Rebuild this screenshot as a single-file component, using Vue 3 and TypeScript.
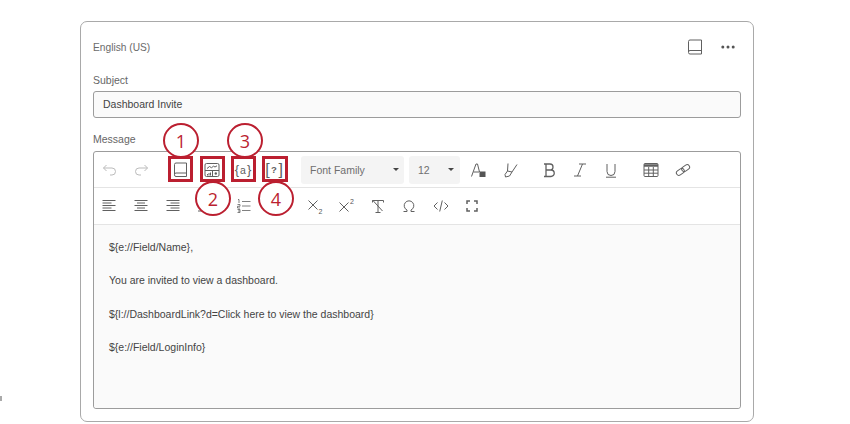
<script setup lang="ts">
const lines: string[] = [
  '${e://Field/Name},',
  'You are invited to view a dashboard.',
  '${l://DashboardLink?d=Click here to view the dashboard}',
  '${e://Field/LoginInfo}',
]
const marks = [
  { n: 1, cls: 'c1' },
  { n: 2, cls: 'c2' },
  { n: 3, cls: 'c3' },
  { n: 4, cls: 'c4' },
]
const boxes = ['b1', 'b2', 'b3', 'b4']
</script>

<template>
  <div class="page">
    <section class="card">
      <header class="head">
        <span class="lang">English (US)</span>
        <div class="head-icons">
          <svg class="ico" viewBox="0 0 16 16"><path d="M1.5 13V2.500A1.500 1.500 0 0 1 3 1H14.500V15H3a1.500 1.500 0 0 1-1.500-1.500V13A1.500 1.500 0 0 1 3 11.500H14.500"/></svg>
          <svg width="14" height="4" viewBox="0 0 14 4"><circle cx="1.800" cy="2" r="1.500" fill="#555"/><circle cx="7" cy="2" r="1.500" fill="#555"/><circle cx="12.200" cy="2" r="1.500" fill="#555"/></svg>
        </div>
      </header>

      <label class="lbl subject">Subject</label>
      <div class="input">Dashboard Invite</div>

      <label class="lbl message">Message</label>
      <div class="editor">
        <div class="row row1">
          <div class="group g-hist">
            <svg class="ico dim" viewBox="0 0 16 16"><path d="M4.500 3 1.500 6l3 3M1.500 6H10a3.500 3.500 0 0 1 0 7H8"/></svg>
            <svg class="ico dim" viewBox="0 0 16 16"><path d="M11.500 3l3 3-3 3M14.500 6H6a3.500 3.500 0 0 0 0 7h2"/></svg>
          </div>
          <div class="group g-ins">
            <svg class="ico" viewBox="0 0 16 16"><path d="M1.500 12.500V2.500A1.500 1.500 0 0 1 3 1H13.500V14.500H3A1.500 1.500 0 0 1 1.500 13V12.500A1.500 1.500 0 0 1 3 11H13.500"/></svg>
            <svg class="ico" viewBox="0 0 16 16"><rect x="1" y="1.500" width="14" height="13" rx="1.500"/><path d="M1 8.500h14M3 6.500l2.500-2 2 1.200 2-1.500 1.500.8 2-1.200M8.500 8.500v6"/><path d="M3.500 13.500V12M5 13.500V11M6.500 13.500V10.500" stroke-width="1"/><circle cx="11.800" cy="11.500" r="1.200" fill="#606060" stroke="none"/></svg>
            <span class="txt-ico">{<i>a</i>}</span>
            <span class="txt-ico tall">[<i>?</i>]</span>
          </div>
          <div class="sel fam"><span>Font Family</span><i class="caret"></i></div>
          <div class="sel size"><span>12</span><i class="caret"></i></div>
          <div class="group g-col">
            <svg class="ico" viewBox="0 0 16 16"><path d="M1.500 14.500 6 2h1.500l2 8M3.500 10H9"/><rect x="9.500" y="9.500" width="6" height="5.500" fill="#555" stroke="none"/></svg>
            <svg class="ico" viewBox="0 0 16 16"><path d="M6 1.500 5.500 9 3 12.500 3.500 15 7.500 14 10 10 15 2.500M5.500 9 10 10"/></svg>
          </div>
          <div class="group g-fmt">
            <svg class="ico" viewBox="0 0 16 16"><path d="M3 2h6a3 3 0 0 1 0 6H5M5 8h5a3.200 3.200 0 0 1 0 6.500H3M5 2v12.500" stroke-width="1.300"/></svg>
            <svg class="ico" viewBox="0 0 16 16"><path d="M7 2h7M2 14h7M10.500 2 5.500 14"/></svg>
            <svg class="ico" viewBox="0 0 16 16"><path d="M4 2v7.500a4 4 0 0 0 8 0V2M3 15.200h10"/></svg>
          </div>
          <div class="group g-tbl">
            <svg class="ico" viewBox="0 0 16 16"><rect x="1" y="1.500" width="14" height="13" rx="1"/><path d="M1 3.500h14" stroke-width="2.500"/><path d="M1 8h14M1 11.200h14M5.700 5v9.500M10.300 5v9.500"/></svg>
            <svg class="ico" viewBox="0 0 16 16"><g transform="rotate(-35 8 8)"><rect x="0.500" y="5.500" width="8.500" height="5" rx="2.500"/><rect x="7" y="5.500" width="8.500" height="5" rx="2.500"/></g></svg>
          </div>
        </div>
        <div class="row row2">
          <div class="group g-align">
            <svg class="ico" viewBox="0 0 16 16"><path d="M1.500 2.500h13M1.500 5h9M1.500 7.500h13M1.500 10h9M1.500 12.500h13"/></svg>
            <svg class="ico" viewBox="0 0 16 16"><path d="M1.500 2.500h13M4 5h8M1.500 7.500h13M4 10h8M1.500 12.500h13"/></svg>
            <svg class="ico" viewBox="0 0 16 16"><path d="M1.500 2.500h13M5.500 5h9M1.500 7.500h13M5.500 10h9M1.500 12.500h13"/></svg>
          </div>
          <div class="group g-list">
            <svg class="ico" viewBox="0 0 16 16"><path d="M1 3h14M1 8h14M1 13h14"/></svg>
            <svg class="ico" viewBox="0 0 16 16"><path d="M6 3.500h8.500M6 8h8.500M6 12.500h8.500M2 1.500h1v3.500M1.500 6.500H4V8.300H1.500V10H4M1.500 11.500H4V14.500H1.500M2 13H4" stroke-width="0.800"/></svg>
          </div>
          <div class="group g-misc">
            <span class="ico-wrap"><svg class="ico" viewBox="0 0 16 16"><path d="M1.500 2.500l9 9M10.500 2.500l-9 9"/></svg><span class="s2 down">2</span></span>
            <span class="ico-wrap"><svg class="ico" viewBox="0 0 16 16"><path d="M1.500 4.500l9 9M10.500 4.500l-9 9"/></svg><span class="s2 up">2</span></span>
            <svg class="ico" viewBox="0 0 16 16"><path d="M2.500 2.500h11v2M2.500 2.500v2M8 2.500V14M5.500 14.500h5M2.500 2l10 11"/></svg>
            <svg class="ico" viewBox="0 0 16 16"><path d="M2.500 13.500H6V12A4.800 4.800 0 1 1 10 12v1.500h3.500"/></svg>
            <svg class="ico" viewBox="0 0 16 16"><path d="M4.500 4.500 1 8l3.500 3.500M11.500 4.500 15 8l-3.500 3.500M9.300 2.500l-2.600 11"/></svg>
            <svg class="ico" viewBox="0 0 16 16"><path d="M3 6V3h3M10 3h3v3M13 10v3h-3M6 13H3v-3" stroke-width="1.500"/></svg>
          </div>
        </div>
        <div class="body">
          <p v-for="l in lines" :key="l">{{ l }}</p>
        </div>
      </div>
    </section>

    <span v-for="b in boxes" :key="b" class="hl" :class="b"></span>
    <span v-for="m in marks" :key="m.n" class="mark" :class="m.cls">{{ m.n }}</span>
    <span class="speck"></span>
  </div>
</template>

<style>
html, body { margin: 0; background: #fff; }
</style>

<style scoped>
.page {
  position: relative;
  width: 850px;
  height: 424px;
  overflow: hidden;
  background: #fff;
  font-family: "Liberation Sans", Arial, sans-serif;
  color: #555;
  padding: 21px 0 0 80px;
  box-sizing: border-box;
}
.card {
  width: 674px;
  height: 401px;
  box-sizing: border-box;
  border: 1px solid #a9a9a9;
  border-radius: 7px;
  padding: 0 12px;
  background: #fff;
}
.head {
  height: 50px;
  display: flex;
  align-items: center;
  justify-content: space-between;
}
.lang { font-size: 10.2px; color: #6b6b6b; }
.head-icons { display: flex; align-items: center; gap: 18px; margin-right: 6px; }
.lbl { display: block; font-size: 10.5px; color: #666; line-height: 13px; }
.subject { margin-top: 2px; }
.input {
  margin-top: 4px;
  height: 27px;
  box-sizing: border-box;
  border: 1px solid #9c9c9c;
  border-radius: 3px;
  background: #fafafa;
  font-size: 10.5px;
  line-height: 25px;
  padding-left: 9px;
  color: #444;
}
.message { margin-top: 15px; }
.editor {
  margin-top: 5px;
  height: 258px;
  box-sizing: border-box;
  border: 1px solid #9c9c9c;
  border-radius: 3px;
  display: flex;
  flex-direction: column;
}
.row { display: flex; align-items: center; border-bottom: 1px solid #e4e4e4; flex: none; }
.row1 { height: 35px; }
.row2 { height: 36px; }
.group { display: flex; align-items: center; }
.ico {
  width: 16px;
  height: 16px;
  fill: none;
  stroke: #606060;
  stroke-width: 1;
  flex: none;
}
.dim { stroke: #bbb; }
.g-hist { margin-left: 8px; gap: 15px; }
.g-ins { margin-left: 24px; gap: 15px; }
.txt-ico {
  width: 16px;
  display: flex;
  align-items: center;
  justify-content: center;
  font-size: 13px;
  line-height: 16px;
  color: #606060;
  white-space: nowrap;
}
.txt-ico i { font-style: normal; font-size: 10.5px; padding: 0 1px; }
.tall { font-size: 16px; }
.tall i { font-weight: 700; font-size: 9.5px; padding: 0 1.5px; }
.sel {
  height: 28px;
  background: #f4f4f4;
  border-radius: 3px;
  display: flex;
  align-items: center;
  justify-content: space-between;
  box-sizing: border-box;
  font-size: 10.5px;
  color: #6f6f6f;
  flex: none;
}
.fam { width: 103px; padding: 0 5px 0 9px; margin-left: 19px; }
.size { width: 51px; padding: 0 6px 0 9px; margin-left: 5px; }
.caret {
  width: 0;
  height: 0;
  border-left: 3px solid transparent;
  border-right: 3px solid transparent;
  border-top: 3px solid #444;
}
.g-col { margin-left: 10px; gap: 16px; }
.g-fmt { margin-left: 23px; gap: 15px; }
.g-tbl { margin-left: 24px; gap: 16px; }
.g-align { margin-left: 7px; gap: 16px; }
.g-list { margin-left: 16px; gap: 23px; }
.g-misc { margin-left: 55px; gap: 15.4px; }
.ico-wrap { position: relative; display: block; width: 16px; height: 16px; }
.s2 { position: absolute; font-size: 7px; line-height: 7px; left: 11.5px; color: #555; }
.down { top: 10px; }
.up { top: 0; }
.body {
  flex: 1;
  background: #fafafa;
  padding: 16px 15px 0;
  border-radius: 0 0 3px 3px;
  font-size: 10.5px;
  color: #444;
}
.body p { margin: 0 0 20.3px; line-height: 13px; }
.hl {
  position: absolute;
  top: 156px;
  width: 25px;
  height: 26px;
  box-sizing: border-box;
  border: 3px solid #bb1f30;
}
.b1 { left: 168px; }
.b2 { left: 200px; }
.b3 { left: 231px; }
.b4 { left: 262px; width: 26px; }
.mark {
  position: absolute;
  width: 36px;
  height: 35px;
  box-sizing: border-box;
  border: 2.5px solid #bb1f30;
  border-radius: 50%;
  background: #fff;
  color: #bb1f30;
  font-family: "Open Sans", sans-serif;
  font-size: 18px;
  display: flex;
  align-items: center;
  justify-content: center;
}
.c1 { left: 163px; top: 123px; }
.c2 { left: 195px; top: 181px; }
.c3 { left: 227px; top: 123px; }
.c4 { left: 258px; top: 181px; }
.speck {
  position: absolute;
  left: 0;
  top: 396px;
  width: 2px;
  height: 5px;
  background: #aaa;
}
</style>
